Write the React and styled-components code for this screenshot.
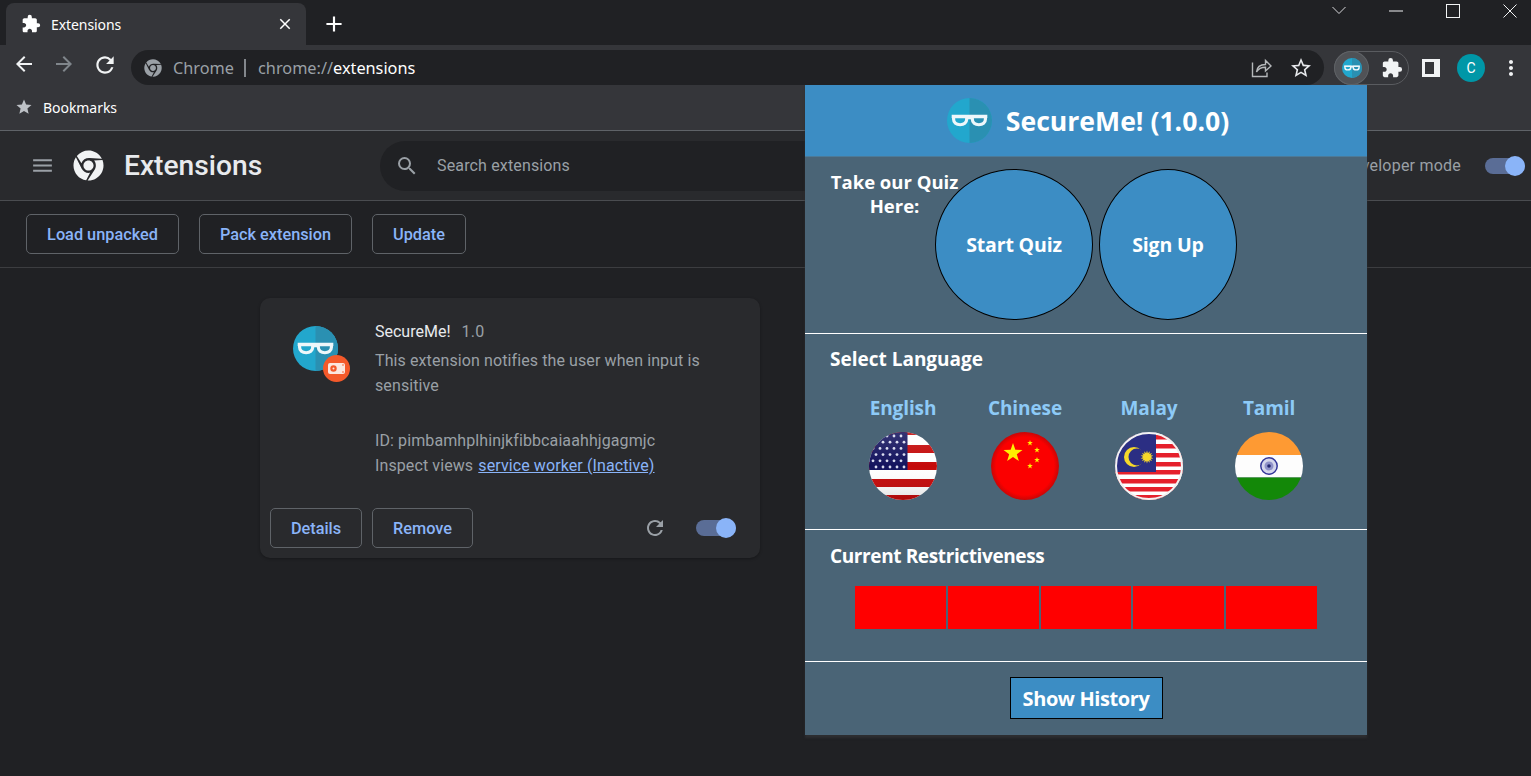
import React from 'react'
import styled, { createGlobalStyle } from 'styled-components'
import { FaChrome } from 'react-icons/fa'
import {
  MdExtension, MdClose, MdAdd, MdArrowBack, MdArrowForward, MdRefresh, MdStar, MdStarBorder,
  MdMoreVert, MdMenu, MdSearch,
} from 'react-icons/md'

const GlobalStyle = createGlobalStyle`
  html, body { margin: 0; padding: 0; background: #202124; }
  * { box-sizing: border-box; }
  body { font-family: Roboto, "Liberation Sans", sans-serif; }
`

const Page = styled.div`
  position: relative;
  width: 1531px;
  height: 776px;
  overflow: hidden;
  background: #202124;
  color: #e8eaed;
`

/* browser chrome */
const TabStrip = styled.div`
  display: flex;
  align-items: flex-end;
  height: 45px;
  padding-left: 6px;
  background: #202124;
`

const Tab = styled.div`
  position: relative;
  display: flex;
  align-items: center;
  width: 300px;
  height: 42px;
  padding: 0 12px 0 15px;
  background: #35363a;
  border-radius: 8px 8px 0 0;
  color: #fff;
  font: 400 14px "Noto Sans", sans-serif;
  letter-spacing: -0.08px;
  svg:first-child { margin-right: 10px; }
  svg:last-child { margin-left: auto; }
`

const NewTab = styled.div`
  display: flex;
  align-self: center;
  margin: 3px 0 0 15px;
  color: #fff;
`

const WindowControls = styled.div`
  display: flex;
  align-self: flex-start;
  margin-left: auto;
  margin-right: -7px;
`

const WindowButton = styled.div`
  display: flex;
  justify-content: center;
  align-items: center;
  width: 57px;
  height: 21px;
`

const Toolbar = styled.div`
  display: flex;
  align-items: center;
  height: 40px;
  padding-left: 12px;
  background: #35363a;
`

const NavIcons = styled.div`
  display: flex;
  gap: 16px;
  margin-right: 13px;
`

const NavIcon = styled.span`
  display: flex;
  color: ${p => (p.$dim ? '#80868b' : '#f1f3f4')};
`

const MoreIcon = styled(NavIcon)`
  margin-left: 14px;
`

const Omnibox = styled.div`
  display: flex;
  align-items: center;
  width: 1193px;
  height: 35px;
  margin-top: 5px;
  padding: 0 12px 0 13px;
  background: #202124;
  border-radius: 18px;
  font: 400 16.3px "Noto Sans", sans-serif;
  color: #9aa0a6;
`

const SiteName = styled.span`
  margin-left: 11px;
  padding-right: 10px;
  border-right: 2px solid #83878c;
  line-height: 18px;
  margin-right: 12px;
`

const UrlHost = styled.span`
  color: #fff;
`

const OmniActions = styled.div`
  display: flex;
  align-items: center;
  gap: 17px;
  margin-left: auto;
  margin-right: -1px;
  color: #c4c7c9;
`

const ExtensionPill = styled.div`
  display: flex;
  align-items: center;
  width: 75px;
  height: 34px;
  margin: 5px 0 0 10px;
  border: 1px solid #5a5c60;
  border-radius: 17px;
  color: #f1f3f4;
`

const PinnedButton = styled.div`
  display: flex;
  align-items: center;
  justify-content: center;
  width: 35px;
  height: 34px;
  margin: -1px 0 -1px -1px;
  border-radius: 50%;
  border: 1px solid #5f6266;
  background: #505256;
  flex: none;
`

const PuzzleSlot = styled.div`
  display: flex;
  justify-content: center;
  flex: 1;
  padding-left: 6px;
`

const ToolbarRight = styled.div`
  display: flex;
  align-items: center;
  margin: 5px 0 0 13px;
`

const Avatar = styled.div`
  display: flex;
  align-items: center;
  justify-content: center;
  width: 28px;
  height: 28px;
  margin-left: 17px;
  border-radius: 50%;
  background: #0097a7;
  color: #fff;
  font-size: 14px;
`

const BookmarksBar = styled.div`
  display: flex;
  align-items: center;
  height: 46px;
  padding: 0 0 0 15px;
  background: #35363a;
  border-bottom: 1px solid #5f6368;
  color: #fff;
  font: 400 14px "Noto Sans", sans-serif;
  letter-spacing: -0.05px;
  svg { color: #bdc1c6; margin-right: 10px; margin-top: -1px; }
`

/* extensions page */
const PageHeader = styled.div`
  display: flex;
  align-items: center;
  height: 70px;
  padding-left: 30px;
  background: #292a2d;
  border-bottom: 1px solid #4a4c50;
`

const MenuIcon = styled.span`
  display: flex;
  color: #9aa0a6;
  margin-right: 18px;
`

const PageTitle = styled.h1`
  margin: 0 0 0 20px;
  font: 500 28.2px Roboto, sans-serif;
  color: #e8eaed;
  width: 256px;
`

const SearchBox = styled.div`
  display: flex;
  align-items: center;
  width: 440px;
  height: 50px;
  padding-left: 15px;
  background: #202124;
  border-radius: 25px 0 0 25px;
  color: #9aa0a6;
  font-size: 16px;
  letter-spacing: 0.15px;
  span { margin-left: 18px; }
`

const DevMode = styled.div`
  display: flex;
  align-items: center;
  margin-left: auto;
  margin-right: 6px;
  color: #9aa0a6;
  font-size: 16px;
  letter-spacing: 0.22px;
  gap: 24px;
`

const Track = styled.span`
  position: relative;
  display: block;
  width: 40px;
  height: 16px;
  border-radius: 8px;
  background: #5a6d96;
`

const Thumb = styled.span`
  position: absolute;
  top: -2px;
  right: 0;
  width: 20px;
  height: 20px;
  border-radius: 50%;
  background: #8ab4f8;
`

const ActionRow = styled.div`
  display: flex;
  gap: 20px;
  align-items: center;
  height: 67px;
  padding: 0 0 0 26px;
  border-bottom: 1px solid #3c3d40;
`

const OutlineButton = styled.button`
  height: 40px;
  width: ${p => p.$w}px;
  padding: 0;
  background: transparent;
  border: 1px solid #5f6368;
  border-radius: 5px;
  color: #8ab4f8;
  font: 500 16.3px Roboto, sans-serif;
`

const Content = styled.div`
  padding: 30px 0 0 260px;
`

const Card = styled.div`
  display: flex;
  flex-direction: column;
  width: 500px;
  height: 260px;
  background: #292a2d;
  border-radius: 10px;
  box-shadow: 0 1px 3px rgba(0, 0, 0, 0.3);
`

const CardMain = styled.div`
  display: flex;
  flex: 1;
  padding: 21px 40px 0 33px;
`

const CardIcon = styled.div`
  position: relative;
  width: 45px;
  height: 45px;
  margin: 7px 37px 0 0;
  flex: none;
`

const Badge = styled.div`
  position: absolute;
  left: 30px;
  top: 29px;
`

const CardName = styled.div`
  display: flex;
  gap: 11px;
  padding-top: 1px;
  font-size: 16px;
  line-height: 24px;
  color: #e8eaed;
  span { color: #9aa0a6; letter-spacing: 0.3px; }
`

const CardText = styled.div`
  margin-top: ${p => p.$top || 0}px;
  font-size: 16px;
  line-height: 25px;
  letter-spacing: 0.1px;
  color: #9aa0a6;
`

const CardLink = styled.a`
  margin-left: 1px;
  color: #8ab4f8;
  text-decoration: underline;
`

const CardFooter = styled.div`
  display: flex;
  align-items: center;
  gap: 10px;
  height: 40px;
  margin: 0 24px 10px 10px;
`

const FooterRefresh = styled.span`
  display: flex;
  margin-left: auto;
  margin-right: 19px;
  color: #9aa0a6;
`

/* popup */
const Popup = styled.div`
  position: absolute;
  left: 805px;
  top: 85px;
  width: 562px;
  height: 650px;
  background: #4a6476;
  box-shadow: 0 3px 2px rgba(45, 47, 50, 0.9);
  color: #fff;
  font-family: "Open Sans", "Noto Sans", sans-serif;
  font-weight: 700;
`

const PopupHeader = styled.div`
  display: flex;
  align-items: center;
  justify-content: center;
  gap: 14px;
  height: 72px;
  padding-left: 4px;
  background: #3c8dc4;
  border-bottom: 1px solid #4c7a98;
  font-size: 26.6px;
`

const Section = styled.section`
  height: ${p => p.$h}px;
  padding: ${p => p.$top}px 0 0 25px;
  border-bottom: ${p => (p.$last ? 0 : '1px solid #fff')};
`

const QuizRow = styled(Section)`
  display: flex;
  align-items: flex-start;
`

const QuizLabel = styled.div`
  width: 129px;
  margin-top: 1px;
  text-align: center;
  font-size: 18.5px;
  line-height: 24px;
`

const RoundButton = styled.button`
  width: ${p => p.$w}px;
  height: 151px;
  flex: none;
  margin-left: ${p => p.$ml}px;
  padding: 0;
  background: #3c8dc4;
  border: 1px solid #000;
  border-radius: 50%;
  color: #fff;
  font: inherit;
  font-size: 19.5px;
  letter-spacing: -0.15px;
`

const Heading = styled.h2`
  margin: 0;
  font-size: 19px;
  line-height: 24px;
  font-weight: 700;
  letter-spacing: ${p => p.$spacing}px;
`

const Languages = styled.div`
  display: grid;
  grid-template-columns: 122px 122px 126px 114px;
  margin: 25px 0 0 12px;
`

const Language = styled.div`
  display: flex;
  flex-direction: column;
  align-items: center;
  gap: 12px;
  color: #8dcaf7;
  font-size: 19px;
  line-height: 24px;
  letter-spacing: -0.1px;
`

const Meter = styled.div`
  display: flex;
  gap: 2px;
  width: 462px;
  height: 43px;
  margin: 18px 0 0 25px;
`

const MeterCell = styled.div`
  flex: 1;
  background: #f00;
`

const HistoryRow = styled(Section)`
  display: flex;
  justify-content: center;
  padding-left: 0;
`

const HistoryButton = styled.button`
  width: 153px;
  height: 42px;
  padding: 0;
  background: #3c8dc4;
  border: 1px solid #000;
  color: #fff;
  font: inherit;
  font-size: 20px;
  letter-spacing: -0.4px;
`

const Glasses = ({ size }) => (
  <svg width={size} height={size} viewBox="0 0 48 48">
    <circle cx="24" cy="24" r="24" fill="#22a7cd" />
    <path d="M24 0a24 24 0 0 1 0 48z" fill="#2a90b2" />
    <g fill="none" stroke="#eef7fa" strokeWidth="3.4" strokeLinejoin="round">
      <path d="M7 20h14v2.5c0 4-3 6-7 6s-7-2-7-6z" />
      <path d="M41 20H27v2.5c0 4 3 6 7 6s7-2 7-6z" />
      <path d="M5 19.500h38M21 21h6" />
    </g>
  </svg>
)

const RecordBadge = () => (
  <svg width="27" height="27" viewBox="0 0 27 27">
    <circle cx="13.5" cy="13.5" r="13.5" fill="#f4592a" />
    <rect x="5" y="8" width="17" height="11" rx="2" fill="#fbe6df" />
    <circle cx="10.5" cy="13.5" r="3.2" fill="#f4592a" />
    <circle cx="10.5" cy="13.5" r="1" fill="#fbe6df" />
    <circle cx="20" cy="10" r=".8" fill="#f4592a" />
    <circle cx="20" cy="17" r=".8" fill="#f4592a" />
  </svg>
)

const ShareIcon = () => (
  <svg width="22" height="22" viewBox="0 0 22 22" fill="none" stroke="#b5b8ba" strokeWidth="1.4">
    <path d="M2.5 5.500v14h14.500v-4" />
    <path d="M6.500 15c.5-5 4-7.500 9-7.500V3.500l5.500 5.500-5.500 5v-3.800c-4 0-7 1.300-9 4.800z" />
  </svg>
)

const SidePanelIcon = () => (
  <svg width="18" height="18" viewBox="0 0 18 18">
    <rect width="18" height="18" fill="#f1f3f4" />
    <rect x="3" y="3" width="9" height="12" fill="#35363a" />
  </svg>
)

const ChevronGlyph = () => (
  <svg width="14" height="9" viewBox="0 0 14 9" fill="none" stroke="#d7d8da">
    <path d="M.5 1l6.500 6.500 6.500-6.500" />
  </svg>
)

const MinimizeGlyph = () => (
  <svg width="14" height="2" viewBox="0 0 14 2"><path d="M0 1h14" stroke="#f1f3f4" /></svg>
)

const MaximizeGlyph = () => (
  <svg width="14" height="14" viewBox="0 0 14 14"><rect x=".5" y=".5" width="13" height="13" fill="none" stroke="#f1f3f4" /></svg>
)

const CloseGlyph = () => (
  <svg width="14" height="14" viewBox="0 0 14 14"><path d="M.5.500l13 13M13.500.500l-13 13" stroke="#f1f3f4" /></svg>
)

const star = (cx, cy, r, points = 5, inner = 0.4) => {
  const pts = []
  for (let i = 0; i < points * 2; i++) {
    const a = -Math.PI / 2 + (i * Math.PI) / points
    const rad = i % 2 ? r * inner : r
    pts.push(`${(cx + rad * Math.cos(a)).toFixed(2)},${(cy + rad * Math.sin(a)).toFixed(2)}`)
  }
  return pts.join(' ')
}

const Flag = ({ id, children, ring, gloss }) => (
  <svg width="68" height="68" viewBox="0 0 68 68">
    <defs>
      <clipPath id={`clip-${id}`}><circle cx="34" cy="34" r="34" /></clipPath>
      <linearGradient id={`shade-${id}`} x1="0" y1="0" x2="0" y2="1">
        <stop offset="0" stopColor="#fff" stopOpacity=".14" />
        <stop offset=".5" stopColor="#fff" stopOpacity="0" />
        <stop offset="1" stopColor="#000" stopOpacity=".12" />
      </linearGradient>
    </defs>
    <g clipPath={`url(#clip-${id})`}>
      {children}
      {gloss && <circle cx="34" cy="34" r="34" fill={`url(#shade-${id})`} />}
    </g>
    {ring && <circle cx="34" cy="34" r="33" fill="none" stroke="#f2f2f2" strokeWidth="2" />}
  </svg>
)

const UsFlag = () => {
  const stars = []
  for (let r = 0; r < 6; r++) {
    for (let c = 0; c < 5; c++) {
      stars.push(<circle key={`${r}-${c}`} cx={4 + c * 7 + (r % 2 ? 3 : 0)} cy={4 + r * 6.2} r="1.4" fill="#d8dbee" />)
    }
  }
  return (
    <Flag id="us" gloss>
      <rect width="68" height="68" fill="#fff" />
      <rect y="0" width="68" height="3" fill="#c40a0a" />
      <rect y="13" width="68" height="8" fill="#c40a0a" />
      <rect y="30" width="68" height="8" fill="#c40a0a" />
      <rect y="47" width="68" height="8" fill="#c40a0a" />
      <rect y="63" width="68" height="5" fill="#c40a0a" />
      <rect width="38.5" height="38" fill="#14145e" />
      {stars}
    </Flag>
  )
}

const ChinaFlag = () => (
  <Flag id="cn">
    <defs>
      <radialGradient id="cn-red" cx=".5" cy=".5" r=".5">
        <stop offset=".85" stopColor="#fb0000" />
        <stop offset="1" stopColor="#c80606" />
      </radialGradient>
    </defs>
    <rect width="68" height="68" fill="url(#cn-red)" />
    <polygon points={star(22, 21, 10)} fill="#fff000" />
    <polygon points={star(39, 11, 3)} fill="#fff000" />
    <polygon points={star(46, 18, 3)} fill="#fff000" />
    <polygon points={star(46, 28, 3)} fill="#fff000" />
    <polygon points={star(39, 34, 3)} fill="#fff000" />
  </Flag>
)

const MalayFlag = () => (
  <Flag id="my" ring>
    <rect width="68" height="68" fill="#fff" />
    {[3, 12, 21, 30, 38, 47, 55, 63].map(y => (
      <rect key={y} y={y} width="68" height="4.5" fill="#e5202c" />
    ))}
    <rect width="41" height="40" fill="#2b2e83" />
    <circle cx="19" cy="25" r="10" fill="#f6d72a" />
    <circle cx="22" cy="25" r="8.5" fill="#2b2e83" />
    <polygon points={star(32, 25, 6.5, 14, 0.6)} fill="#f6d72a" />
  </Flag>
)

const IndiaFlag = () => (
  <Flag id="in">
    <rect width="68" height="23" fill="#fe9a33" />
    <rect y="23" width="68" height="22.5" fill="#fdfdfd" />
    <rect y="45.5" width="68" height="22.5" fill="#138808" />
    <circle cx="34" cy="34" r="8.2" fill="#d5d6ec" stroke="#34379a" strokeWidth="1.5" />
    <circle cx="34" cy="34" r="4.5" fill="#8f91c9" />
    <circle cx="34" cy="34" r="1.8" fill="#23266f" />
  </Flag>
)

const languages = [
  ['English', <UsFlag />],
  ['Chinese', <ChinaFlag />],
  ['Malay', <MalayFlag />],
  ['Tamil', <IndiaFlag />],
]

const Toggle = () => (
  <Track><Thumb /></Track>
)

const App = () => {
  return (
    <Page>
      <GlobalStyle />
      <TabStrip>
        <Tab>
          <MdExtension size={20} />
          Extensions
          <MdClose size={18} />
        </Tab>
        <NewTab><MdAdd size={26} /></NewTab>
        <WindowControls>
          <WindowButton><ChevronGlyph /></WindowButton>
          <WindowButton><MinimizeGlyph /></WindowButton>
          <WindowButton><MaximizeGlyph /></WindowButton>
          <WindowButton><CloseGlyph /></WindowButton>
        </WindowControls>
      </TabStrip>

      <Toolbar>
        <NavIcons>
          <NavIcon><MdArrowBack size={24} /></NavIcon>
          <NavIcon $dim><MdArrowForward size={24} /></NavIcon>
          <NavIcon><MdRefresh size={26} /></NavIcon>
        </NavIcons>
        <Omnibox>
          <FaChrome size={18} />
          <SiteName>Chrome</SiteName>
          chrome://<UrlHost>extensions</UrlHost>
          <OmniActions>
            <ShareIcon />
            <MdStarBorder size={24} color="#e8eaed" />
          </OmniActions>
        </Omnibox>
        <ExtensionPill>
          <PinnedButton><Glasses size={20} /></PinnedButton>
          <PuzzleSlot><MdExtension size={22} /></PuzzleSlot>
        </ExtensionPill>
        <ToolbarRight>
          <SidePanelIcon />
          <Avatar>C</Avatar>
          <MoreIcon><MdMoreVert size={24} /></MoreIcon>
        </ToolbarRight>
      </Toolbar>

      <BookmarksBar>
        <MdStar size={18} />
        Bookmarks
      </BookmarksBar>

      <PageHeader>
        <MenuIcon><MdMenu size={25} /></MenuIcon>
        <FaChrome size={31} color="#f1f3f4" />
        <PageTitle>Extensions</PageTitle>
        <SearchBox>
          <MdSearch size={24} />
          <span>Search extensions</span>
        </SearchBox>
        <DevMode>
          Developer mode
          <Toggle />
        </DevMode>
      </PageHeader>

      <ActionRow>
        <OutlineButton $w={153}>Load unpacked</OutlineButton>
        <OutlineButton $w={153}>Pack extension</OutlineButton>
        <OutlineButton $w={94}>Update</OutlineButton>
      </ActionRow>

      <Content>
        <Card>
          <CardMain>
            <CardIcon>
              <Glasses size={45} />
              <Badge><RecordBadge /></Badge>
            </CardIcon>
            <div>
              <CardName>SecureMe! <span>1.0</span></CardName>
              <CardText $top={4}>This extension notifies the user when input is sensitive</CardText>
              <CardText $top={30}>ID: pimbamhplhinjkfibbcaiaahhjgagmjc</CardText>
              <CardText>Inspect views <CardLink>service worker (Inactive)</CardLink></CardText>
            </div>
          </CardMain>
          <CardFooter>
            <OutlineButton $w={92}>Details</OutlineButton>
            <OutlineButton $w={101}>Remove</OutlineButton>
            <FooterRefresh><MdRefresh size={24} /></FooterRefresh>
            <Toggle />
          </CardFooter>
        </Card>
      </Content>

      <Popup>
        <PopupHeader>
          <Glasses size={45} />
          SecureMe! (1.0.0)
        </PopupHeader>
        <QuizRow $h={177} $top={12}>
          <QuizLabel>Take our Quiz Here:</QuizLabel>
          <RoundButton $w={158} $ml={-24}>Start Quiz</RoundButton>
          <RoundButton $w={138} $ml={6}>Sign Up</RoundButton>
        </QuizRow>
        <Section $h={196} $top={13}>
          <Heading $spacing={0}>Select Language</Heading>
          <Languages>
            {languages.map(([name, flag]) => (
              <Language key={name}>
                {name}
                {flag}
              </Language>
            ))}
          </Languages>
        </Section>
        <Section $h={132} $top={14}>
          <Heading $spacing={-0.38}>Current Restrictiveness</Heading>
          <Meter>
            {[0, 1, 2, 3, 4].map(i => <MeterCell key={i} />)}
          </Meter>
        </Section>
        <HistoryRow $h={73} $top={15} $last>
          <HistoryButton>Show History</HistoryButton>
        </HistoryRow>
      </Popup>
    </Page>
  )
}

export default App
